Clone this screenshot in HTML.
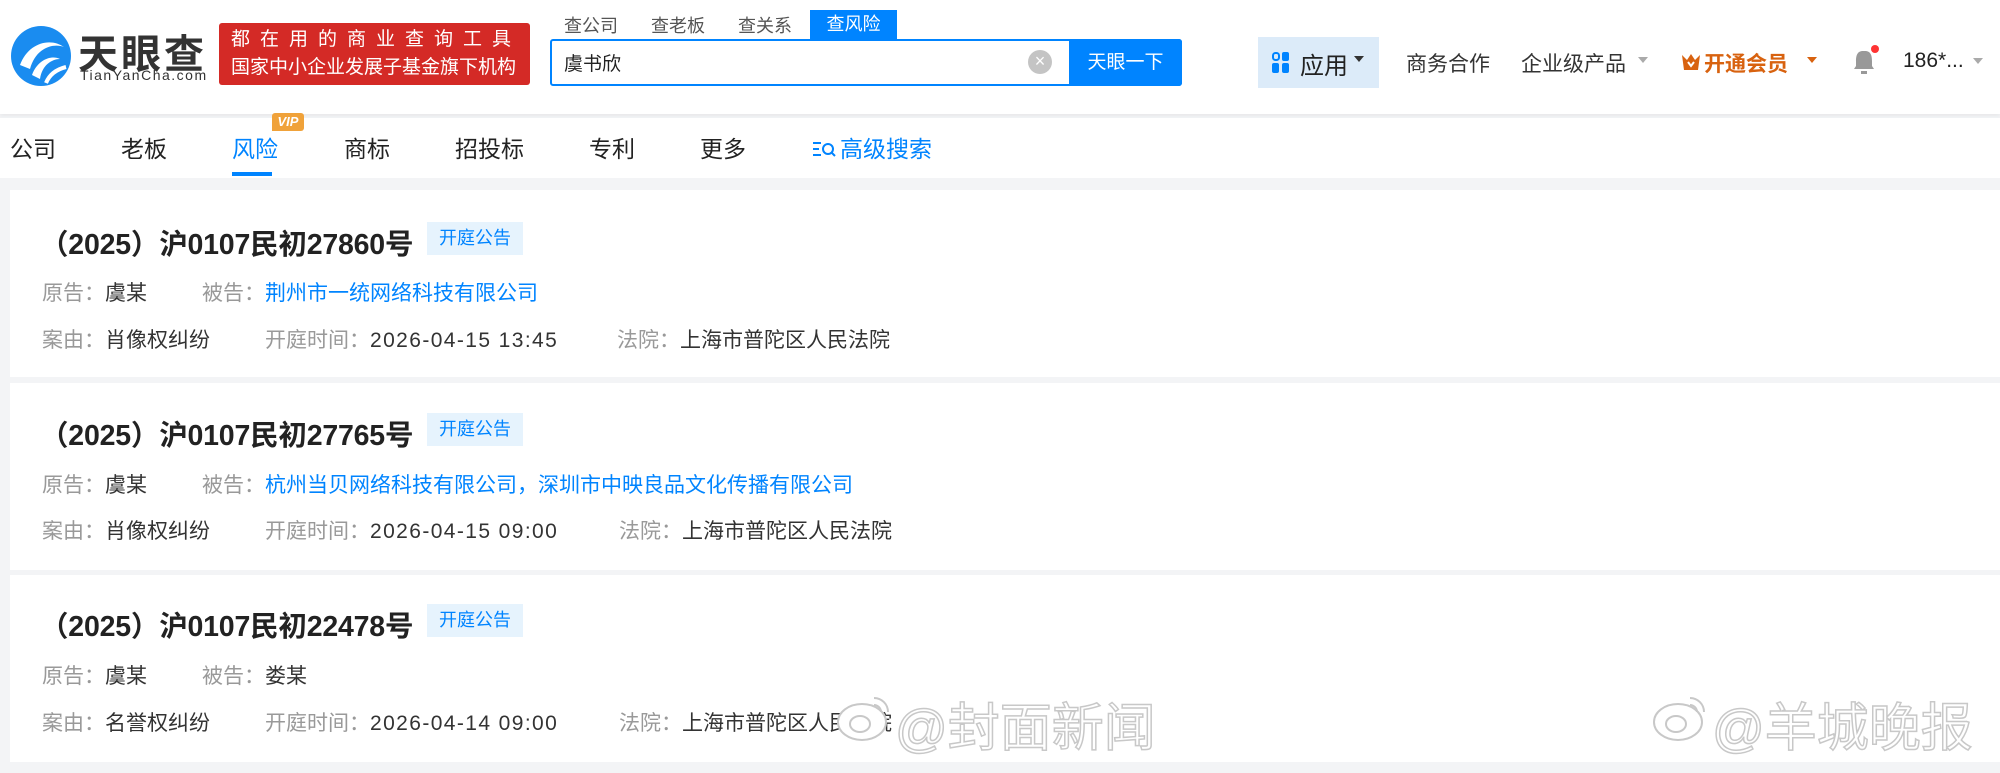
<!DOCTYPE html>
<html><head><meta charset="utf-8"><style>
*{margin:0;padding:0;box-sizing:border-box}
body{width:2000px;height:773px;background:#f3f4f6;font-family:"Liberation Sans","Noto Sans CJK SC",sans-serif;position:relative;overflow:hidden;color:#333}
.a{position:absolute;white-space:nowrap}
.hdr{position:absolute;left:0;top:0;width:2000px;height:114px;background:#fff;box-shadow:0 2px 4px rgba(0,0,0,.05)}
.nav{position:absolute;left:0;top:118px;width:2000px;height:60px;background:#fff}
.card{position:absolute;left:10px;width:1990px;height:187px;background:#fff}
.t{font-size:28.5px;font-weight:bold;color:#222;letter-spacing:-0.2px}
.tag{position:absolute;background:#e6f3fd;color:#0084ff;font-size:18px;width:96px;height:33px;line-height:33px;text-align:center}
.r{font-size:21px;color:#333}
.g{color:#999}
.b{color:#0084ff}
.d{letter-spacing:1.4px}
.wm{font-size:52px;color:#fff;-webkit-text-stroke:1.5px #c8c8c8;font-family:"Liberation Sans","Noto Sans CJK SC",sans-serif}
</style></head><body>
<div class="hdr"></div>
<svg class="a" style="left:10px;top:25px" width="62" height="62" viewBox="0 0 62 62"><circle cx="31" cy="31" r="30" fill="#1a8cf0"/><path d="M10 40 C18 18 40 12 54 22 C44 18 26 22 20 44Z" fill="#fff"/><path d="M22 50 C28 34 42 30 50 34 C42 34 32 40 30 54Z" fill="#fff"/><path d="M36 58 C40 48 48 44 56 42" stroke="#fff" stroke-width="4" fill="none"/></svg>
<div class="a" style="left:78px;top:22px;font-size:40px;font-weight:bold;color:#333;letter-spacing:3px">天眼查</div>
<div class="a" style="left:80px;top:67px;font-size:14px;color:#333;letter-spacing:1.5px">TianYanCha.com</div>
<div class="a" style="left:219px;top:23px;width:311px;height:62px;background:#d42a26;border-radius:3px;color:#fff;font-size:19px;line-height:28px;padding:3px 0 0 12px">
<div style="letter-spacing:10px">都在用的商业查询工具</div><div>国家中小企业发展子基金旗下机构</div></div>
<div class="a" style="left:564px;top:12px;font-size:18px;color:#555">查公司</div>
<div class="a" style="left:651px;top:12px;font-size:18px;color:#555">查老板</div>
<div class="a" style="left:738px;top:12px;font-size:18px;color:#555">查关系</div>
<div class="a" style="left:810px;top:10px;width:87px;height:30px;background:#0084ff;color:#fff;font-size:18px;text-align:center;line-height:28px">查风险</div>
<div class="a" style="left:550px;top:39px;width:632px;height:47px;border:2px solid #0084ff;border-radius:3px;background:#fff"></div>
<div class="a" style="left:564px;top:49px;font-size:19px;color:#222">虞书欣</div>
<div class="a" style="left:1028px;top:50px;width:24px;height:24px;border-radius:50%;background:#c4c4c4;color:#fff;font-size:18px;text-align:center;line-height:23px">×</div>
<div class="a" style="left:1069px;top:39px;width:113px;height:47px;background:#0084ff;color:#fff;font-size:19px;text-align:center;line-height:47px;border-radius:0 3px 3px 0">天眼一下</div>
<div class="a" style="left:1258px;top:37px;width:121px;height:51px;background:#dcebf9"></div>
<svg class="a" style="left:1272px;top:52px" width="18" height="22"><rect x="1" y="1" width="6" height="7" rx="2.5" fill="none" stroke="#0084ff" stroke-width="2"/><rect x="10" y="0" width="7" height="9" rx="2" fill="#0084ff"/><rect x="0" y="11" width="7" height="10" rx="2" fill="#0084ff"/><rect x="10" y="11" width="7" height="10" rx="2" fill="#0084ff"/></svg>
<div class="a" style="left:1300px;top:46px;font-size:24px;color:#222">应用</div>
<div class="a" style="left:1354px;top:56px;border:5px solid transparent;border-top:6px solid #333"></div>
<div class="a" style="left:1406px;top:48px;font-size:21px;color:#333">商务合作</div>
<div class="a" style="left:1521px;top:48px;font-size:21px;color:#333">企业级产品</div>
<div class="a" style="left:1638px;top:57px;border:5px solid transparent;border-top:6px solid #aaa"></div>
<svg class="a" style="left:1681px;top:52px" width="20" height="20"><path d="M1 3 L6 8 L10 2 L14 8 L19 3 L17 18 L3 18Z" fill="#d8620f"/><path d="M7 10 L10 14 L13 10" stroke="#fff" stroke-width="2" fill="none"/></svg>
<div class="a" style="left:1704px;top:48px;font-size:21px;color:#d8620f;font-weight:bold">开通会员</div>
<div class="a" style="left:1807px;top:57px;border:5px solid transparent;border-top:6px solid #d8620f"></div>
<svg class="a" style="left:1850px;top:44px" width="30" height="32"><path d="M13 7 C7 7 6 12 6 17 L6 22 L4 25 L24 25 L22 22 L22 17 C22 12 21 7 15 7Z" fill="#999"/><rect x="11" y="27" width="6" height="3" fill="#999"/><circle cx="25" cy="5" r="4" fill="#f33"/></svg>
<div class="a" style="left:1903px;top:49px;font-size:21px;color:#222">186*...</div>
<div class="a" style="left:1973px;top:58px;border:5px solid transparent;border-top:6px solid #aaa"></div>

<div class="nav"></div>
<div class="a" style="left:10px;top:130px;font-size:23px;color:#222">公司</div>
<div class="a" style="left:121px;top:130px;font-size:23px;color:#222">老板</div>
<div class="a" style="left:232px;top:130px;font-size:23px;color:#0084ff">风险</div>
<div class="a" style="left:272px;top:113px;width:32px;height:18px;background:#f0a23a;color:#fff;font-size:13px;font-weight:bold;font-style:italic;text-align:center;line-height:18px;border-radius:3px 3px 3px 0">VIP</div>
<div class="a" style="left:232px;top:172px;width:40px;height:4px;background:#0084ff"></div>
<div class="a" style="left:344px;top:130px;font-size:23px;color:#222">商标</div>
<div class="a" style="left:455px;top:130px;font-size:23px;color:#222">招投标</div>
<div class="a" style="left:589px;top:130px;font-size:23px;color:#222">专利</div>
<div class="a" style="left:700px;top:130px;font-size:23px;color:#222">更多</div>
<svg class="a" style="left:812px;top:140px" width="24" height="18"><path d="M1 3 H9 M1 9 H7 M1 15 H9" stroke="#0084ff" stroke-width="2"/><circle cx="16" cy="9" r="5" fill="none" stroke="#0084ff" stroke-width="2"/><path d="M19.5 12.5 L23 16" stroke="#0084ff" stroke-width="2"/></svg>
<div class="a" style="left:840px;top:130px;font-size:23px;color:#0084ff">高级搜索</div>

<div class="card" style="top:190px"></div>
<div class="card" style="top:383px"></div>
<div class="card" style="top:575px"></div>

<div class="a t" style="left:40px;top:222px">（2025）沪0107民初27860号</div>
<div class="tag" style="left:427px;top:222px">开庭公告</div>
<div class="a r" style="left:42px;top:277px"><span class="g">原告：</span>虞某</div>
<div class="a r" style="left:202px;top:277px"><span class="g">被告：</span><span class="b">荆州市一统网络科技有限公司</span></div>
<div class="a r" style="left:42px;top:324px"><span class="g">案由：</span>肖像权纠纷</div>
<div class="a r" style="left:265px;top:324px"><span class="g">开庭时间：</span><span class="d">2026-04-15 13:45</span></div>
<div class="a r" style="left:617px;top:324px"><span class="g">法院：</span>上海市普陀区人民法院</div>

<div class="a t" style="left:40px;top:413px">（2025）沪0107民初27765号</div>
<div class="tag" style="left:427px;top:413px">开庭公告</div>
<div class="a r" style="left:42px;top:469px"><span class="g">原告：</span>虞某</div>
<div class="a r" style="left:202px;top:469px"><span class="g">被告：</span><span class="b">杭州当贝网络科技有限公司，深圳市中映良品文化传播有限公司</span></div>
<div class="a r" style="left:42px;top:515px"><span class="g">案由：</span>肖像权纠纷</div>
<div class="a r" style="left:265px;top:515px"><span class="g">开庭时间：</span><span class="d">2026-04-15 09:00</span></div>
<div class="a r" style="left:619px;top:515px"><span class="g">法院：</span>上海市普陀区人民法院</div>

<div class="a t" style="left:40px;top:604px">（2025）沪0107民初22478号</div>
<div class="tag" style="left:427px;top:604px">开庭公告</div>
<div class="a r" style="left:42px;top:660px"><span class="g">原告：</span>虞某</div>
<div class="a r" style="left:202px;top:660px"><span class="g">被告：</span>娄某</div>
<div class="a r" style="left:42px;top:707px"><span class="g">案由：</span>名誉权纠纷</div>
<div class="a r" style="left:265px;top:707px"><span class="g">开庭时间：</span><span class="d">2026-04-14 09:00</span></div>
<div class="a r" style="left:619px;top:707px"><span class="g">法院：</span>上海市普陀区人民法院</div>

<svg class="a" style="left:836px;top:692px" width="56" height="52"><ellipse cx="26" cy="30" rx="24" ry="18" fill="#fff" stroke="#c8c8c8" stroke-width="2"/><ellipse cx="24" cy="32" rx="10" ry="8" fill="none" stroke="#c8c8c8" stroke-width="2"/><path d="M38 6 A14 14 0 0 1 52 20 M38 13 A7 7 0 0 1 45 20" stroke="#c8c8c8" stroke-width="2" fill="none"/></svg>
<div class="a wm" style="left:895px;top:686px">@封面新闻</div>
<svg class="a" style="left:1652px;top:692px" width="56" height="52"><ellipse cx="26" cy="30" rx="24" ry="18" fill="#fff" stroke="#c8c8c8" stroke-width="2"/><ellipse cx="24" cy="32" rx="10" ry="8" fill="none" stroke="#c8c8c8" stroke-width="2"/><path d="M38 6 A14 14 0 0 1 52 20 M38 13 A7 7 0 0 1 45 20" stroke="#c8c8c8" stroke-width="2" fill="none"/></svg>
<div class="a wm" style="left:1712px;top:686px">@羊城晚报</div>
</body></html>
